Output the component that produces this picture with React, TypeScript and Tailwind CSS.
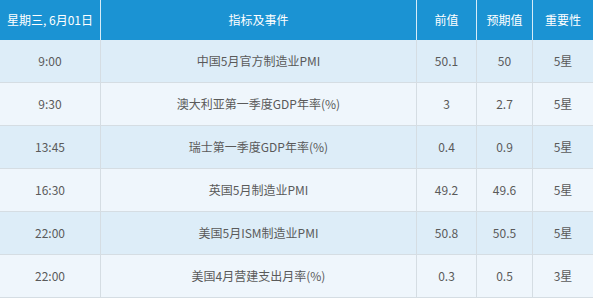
import React from 'react';

const rows = [
  { time: '9:00', event: '中国5月官方制造业PMI', prev: '50.1', exp: '50', level: '5星' },
  { time: '9:30', event: '澳大利亚第一季度GDP年率(%)', prev: '3', exp: '2.7', level: '5星' },
  { time: '13:45', event: '瑞士第一季度GDP年率(%)', prev: '0.4', exp: '0.9', level: '5星' },
  { time: '16:30', event: '英国5月制造业PMI', prev: '49.2', exp: '49.6', level: '5星' },
  { time: '22:00', event: '美国5月ISM制造业PMI', prev: '50.8', exp: '50.5', level: '5星' },
  { time: '22:00', event: '美国4月营建支出月率(%)', prev: '0.3', exp: '0.5', level: '3星' },
];

const cols = 'grid grid-cols-[101px_316px_60px_56px_60px]';

export default function App() {
  return (
    <div className="w-[593px] h-[299px] overflow-hidden bg-white text-[12px] text-[#5a5a5a] [font-family:'Noto_Sans_CJK_SC','Microsoft_YaHei',sans-serif]">
      <div className={`${cols} h-[40px] bg-[#1b93d3] text-white`}>
        <div className="flex items-center justify-center border-r border-[#d6ecf8]">星期三, 6月01日</div>
        <div className="flex items-center justify-center border-r border-[#d6ecf8]">指标及事件</div>
        <div className="flex items-center justify-center border-r border-[#d6ecf8]">前值</div>
        <div className="flex items-center justify-center border-r border-[#d6ecf8]">预期值</div>
        <div className="flex items-center justify-center">重要性</div>
      </div>
      {rows.map((r, i) => (
        <div
          key={i}
          className={`${cols} h-[43px] border-b border-[#d5dde3] ${i % 2 === 0 ? 'bg-[#ddedf8]' : 'bg-[#eff6fc]'}`}
        >
          <div className="flex items-center justify-center border-r border-[#d5dde3]">{r.time}</div>
          <div className="flex items-center justify-center border-r border-[#d5dde3]">{r.event}</div>
          <div className="flex items-center justify-center border-r border-[#d5dde3]">{r.prev}</div>
          <div className="flex items-center justify-center border-r border-[#d5dde3]">{r.exp}</div>
          <div className="flex items-center justify-center">{r.level}</div>
        </div>
      ))}
    </div>
  );
}
